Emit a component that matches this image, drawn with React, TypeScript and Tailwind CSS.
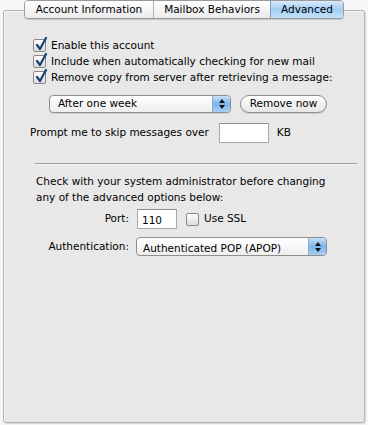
import React from "react";

const font = { fontFamily: '"DejaVu Sans", "Lucida Grande", Verdana, sans-serif', fontSize: "10.5px" };

function Check({ checked }: { checked: boolean }) {
  return (
    <div className="relative w-[13px] h-[13px] shrink-0 rounded-[2px] border border-[#8a8a8a] bg-gradient-to-b from-[#ffffff] to-[#dcdcdc]">
      {checked && (
        <svg className="absolute left-[1px] top-[-3px]" width="13" height="14" viewBox="0 0 13 14">
          <path d="M2 8 L5 12 L11 1" fill="none" stroke="#1c3f7a" strokeWidth="2.2" strokeLinecap="round" strokeLinejoin="round" />
        </svg>
      )}
    </div>
  );
}

function Stepper() {
  return (
    <div className="w-[18px] h-full bg-gradient-to-b from-[#c6e0f8] via-[#7db4ea] to-[#a7cff3] border-l border-[#8aa9cc] flex flex-col items-center justify-center gap-[2px] rounded-r-[4px]">
      <svg width="6" height="4" viewBox="0 0 6 4"><path d="M0 4 L3 0 L6 4Z" fill="#111" /></svg>
      <svg width="6" height="4" viewBox="0 0 6 4"><path d="M0 0 L3 4 L6 0Z" fill="#111" /></svg>
    </div>
  );
}

export default function App() {
  return (
    <div className="w-[368px] h-[425px] bg-[#f6f6f6] relative text-black" style={font}>
      <div className="absolute left-[3px] right-[3px] top-[10px] bottom-[2px] bg-[#e8e8e8] border border-[#b2b2b2] rounded-[3px] shadow-[inset_1px_1px_0_#f4f4f4,1px_1px_1px_rgba(0,0,0,0.12)]" />
      <div className="relative flex flex-col">
        {/* tabs */}
        <div className="flex justify-start pl-[24px] h-[20px]">
          <div className="flex h-[19px] border border-[#9a9a9a] rounded-[4px] overflow-hidden shadow-[0_1px_1px_rgba(0,0,0,0.15)]">
            <div className="w-[129px] flex items-center justify-center bg-gradient-to-b from-[#ffffff] to-[#ebebeb] border-r border-[#b0b0b0]">Account Information</div>
            <div className="w-[117px] flex items-center justify-center bg-gradient-to-b from-[#ffffff] to-[#ebebeb] border-r border-[#7d9cc4]">Mailbox Behaviors</div>
            <div className="w-[72px] flex items-center justify-center bg-gradient-to-b from-[#d9ecfc] via-[#a2cdf3] to-[#c5e2fb]">Advanced</div>
          </div>
        </div>

        {/* checkboxes */}
        <div className="flex flex-col gap-[3px] pl-[33px] mt-[19px]">
          <div className="flex items-center gap-[5px] h-[13px]"><Check checked /><span>Enable this account</span></div>
          <div className="flex items-center gap-[5px] h-[13px]"><Check checked /><span>Include when automatically checking for new mail</span></div>
          <div className="flex items-center gap-[5px] h-[13px]"><Check checked /><span>Remove copy from server after retrieving a message:</span></div>
        </div>

        {/* popup + button */}
        <div className="flex items-center pl-[49px] mt-[11px] h-[18px]">
          <div className="w-[182px] h-[18px] flex border border-[#8e8e8e] rounded-[4px] bg-gradient-to-b from-[#ffffff] to-[#eeeeee] shadow-[0_1px_1px_rgba(0,0,0,0.1)]">
            <div className="flex-1 flex items-center pl-[8px]">After one week</div>
            <Stepper />
          </div>
          <div className="ml-[9px] w-[87px] h-[18px] flex items-center justify-center border border-[#8e8e8e] rounded-full bg-gradient-to-b from-[#ffffff] to-[#e6e6e6] shadow-[0_1px_1px_rgba(0,0,0,0.12)]">Remove now</div>
        </div>

        {/* prompt */}
        <div className="flex items-center pl-[30px] mt-[10px] h-[20px]">
          <span>Prompt me to skip messages over</span>
          <div className="ml-[10px] w-[50px] h-[20px] bg-white border border-[#a9a9a9] border-t-[#8a8a8a]" />
          <span className="ml-[8px]">KB</span>
        </div>

        {/* separator */}
        <div className="ml-[35px] mr-[11px] mt-[20px] h-[2px] border-t border-[#9c9c9c] border-b border-b-[#f5f5f5]" />

        <div className="pl-[36px] mt-[8px] leading-[16px]">
          <div>Check with your system administrator before changing</div>
          <div>any of the advanced options below:</div>
        </div>

        {/* port */}
        <div className="flex items-center mt-[4px] h-[20px]">
          <div className="w-[130px] text-right pr-[1px]">Port:</div>
          <div className="ml-[7px] w-[40px] h-[20px] bg-white border border-[#a9a9a9] border-t-[#8a8a8a] flex items-end pl-[4px] leading-[15px]">110</div>
          <div className="ml-[9px] flex items-center gap-[5px]"><Check checked={false} /><span>Use SSL</span></div>
        </div>

        {/* auth */}
        <div className="flex items-center mt-[8px] h-[19px]">
          <div className="w-[130px] text-right pr-[1px]">Authentication:</div>
          <div className="ml-[6px] w-[191px] h-[19px] flex border border-[#8e8e8e] rounded-[4px] bg-gradient-to-b from-[#ffffff] to-[#eeeeee] overflow-hidden">
            <div className="flex-1 flex items-end pl-[6px] leading-[14px] overflow-hidden">Authenticated POP (APOP)</div>
            <Stepper />
          </div>
        </div>
      </div>
    </div>
  );
}
